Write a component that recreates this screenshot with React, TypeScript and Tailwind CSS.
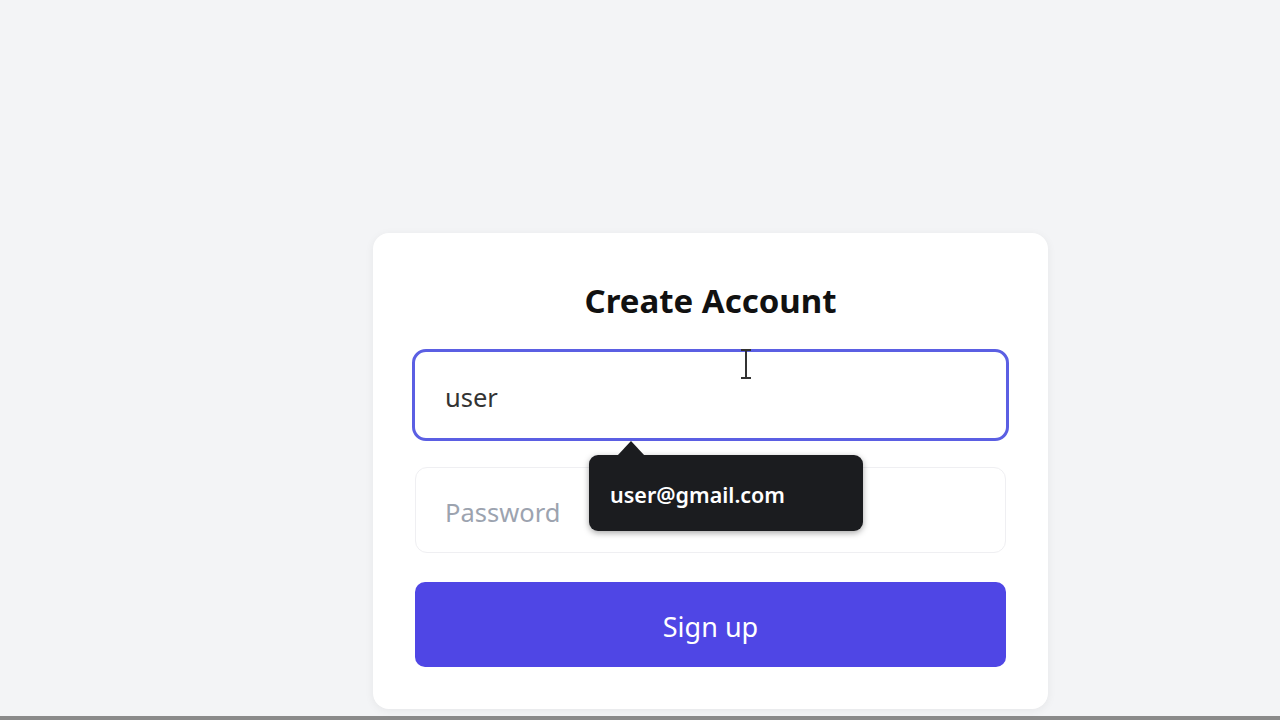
import React from "react";

export default function App() {
  const font = { fontFamily: '"Noto Sans", "Open Sans", sans-serif' };
  return (
    <div className="h-[720px] w-[1280px] bg-[#f3f4f6] flex flex-col overflow-hidden" style={font}>
      <div className="flex-1 pl-[373px] pt-[233px]">
        <div className="relative w-[675px] h-[476px] bg-white rounded-2xl shadow-[0_2px_10px_rgba(0,0,0,0.06)] px-[42px] pt-[47px]">
          <h1 className="text-center text-[33px] font-bold text-[#111] leading-[42px]">Create Account</h1>

          <div className="mt-[27px] -mx-[3px] rounded-[14px] border-[3px] border-[#5b5fe3] h-[92px] flex items-center px-[30px] pt-[5px]">
            <span className="text-[25.5px] text-[#333]">user</span>
          </div>

          <div className="mt-[26px] rounded-[12px] border border-[#efeff2] h-[86px] flex items-center px-[29px] pt-[5px]">
            <span className="text-[25.5px] text-[#9ca3af]">Password</span>
          </div>

          <button className="mt-[29px] w-full h-[85px] rounded-[10px] bg-[#4f46e5] text-white text-[27px] pt-[5px]">
            Sign up
          </button>

          {/* autofill tooltip */}
          <div className="absolute left-[216px] top-[222px] w-[274px] h-[76px] bg-[#1b1c1f] rounded-[9px] shadow-[0_2px_6px_rgba(0,0,0,0.35)] flex items-center px-[21px]">
            <div className="absolute -top-[14px] left-[28px] w-0 h-0 border-l-[14px] border-r-[14px] border-b-[15px] border-l-transparent border-r-transparent border-b-[#1b1c1f]" />
            <span className="text-white text-[21.5px] font-semibold mt-[4px]">user@gmail.com</span>
          </div>

          {/* text cursor */}
          <svg className="absolute left-[366px] top-[116px]" width="14" height="30" viewBox="0 0 14 30">
            <path d="M2 1 H12 M7 1 V29 M2 29 H12" stroke="#333" strokeWidth="2" fill="none" />
          </svg>
        </div>
      </div>
      <div className="h-[4px] bg-[#8a8a8a]" />
    </div>
  );
}
